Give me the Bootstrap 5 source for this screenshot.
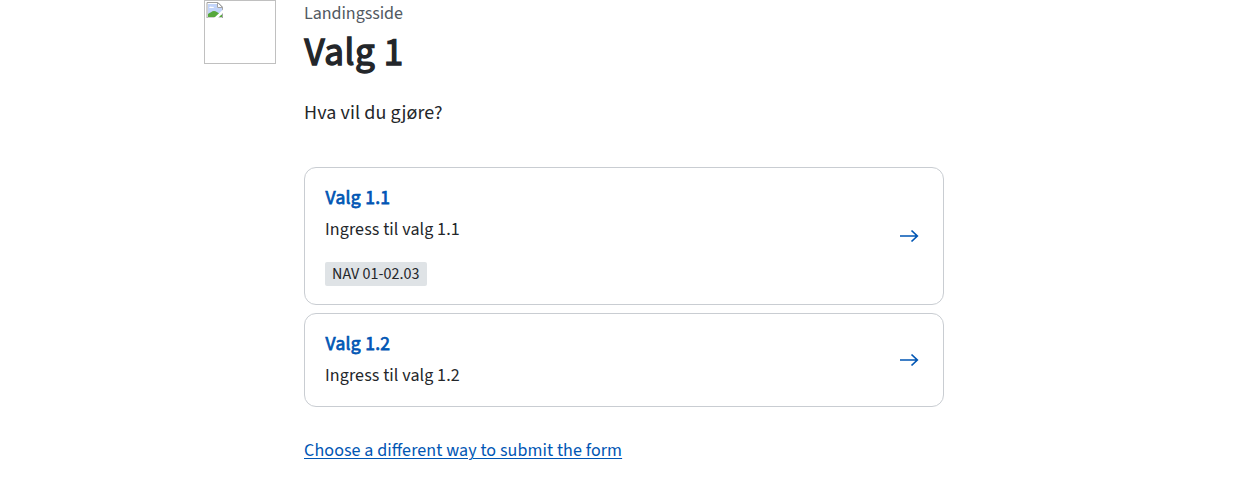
<!DOCTYPE html>
<html lang="no">
<head>
<meta charset="utf-8">
<meta name="viewport" content="width=device-width, initial-scale=1">
<title>Valg 1</title>
<link href="https://cdn.jsdelivr.net/npm/bootstrap@5.3.0/dist/css/bootstrap.min.css" rel="stylesheet">
<style>
body{font-family:"Source Sans 3","Source Sans Pro","Noto Sans CJK JP",sans-serif;color:#23262a;font-size:18px;letter-spacing:.1px;font-feature-settings:"liga" 1;line-height:28px;overflow:hidden}
.page{width:840px;gap:28px}
.picto{width:72px;height:64px;border:1px solid silver;padding:1px}
.picto svg{display:block}
.main-col{width:640px}
.eyebrow{color:#525962;line-height:28px;letter-spacing:-.05px}
h1{font-size:39px;line-height:50px;font-weight:400;-webkit-text-stroke:1.400px currentColor;letter-spacing:.6px;padding-left:.5px}
.lede{font-size:20px;letter-spacing:.1px;line-height:32px;margin:19px 0 38px}
.choice{border:1px solid #c9cdd2;border-radius:12px;padding:15px 20px 16px;color:inherit}
.choice h2{font-size:19.500px;line-height:30px;font-weight:400;-webkit-text-stroke:.750px currentColor;color:#0056b4;letter-spacing:.3px;margin:0 0 3px;padding-left:.5px}
.form-tag{background:#dfe3e6;border-radius:2px;font-size:16px;letter-spacing:.05px;line-height:24px;padding:0 7px;margin-top:18px;margin-bottom:2px}
.arrow{color:#0056b4;margin:1px 1px 0 0}
.alt-link{color:#0056b4;text-underline-offset:2px;text-decoration-thickness:1px;margin-top:30px}
</style>
</head>
<body>
<div class="page d-flex mx-auto align-items-start">
  <div class="picto flex-shrink-0">
    <svg width="18" height="16" viewBox="0 0 18 16"><path d="M1 .5h11l4.500 4.500v11H1z" fill="#fff" stroke="#a3a3a3"/><path d="M2 2h9v4h5v9H2z" fill="#c3d5fa"/><path d="M3 6a2 2 0 0 1 3-1 1.500 1.500 0 0 1 2 1z" fill="#fff"/><path d="M2 15v-3c2-1 4-3 6-3s4 2 8 4v2z" fill="#56a83c"/><path d="M11.500.5v5h5z" fill="#fff" stroke="#a3a3a3"/><path d="M8 16l9-8.500V11l-5 5z" fill="#fff"/></svg>
  </div>
  <main class="main-col">
    <div class="eyebrow">Landingsside</div>
    <h1 class="m-0">Valg 1</h1>
    <p class="lede">Hva vil du gjøre?</p>
    <div class="d-flex flex-column gap-2">
      <a href="#" class="choice d-flex align-items-center justify-content-between text-decoration-none">
        <div><h2>Valg 1.1</h2><div>Ingress til valg 1.1</div><span class="form-tag d-table">NAV 01-02.03</span></div>
        <svg class="arrow" width="24" height="24" viewBox="0 0 24 24" fill="none" stroke="currentColor" stroke-width="1.700"><path d="M2 12h17.500M13.500 6.500 19.300 12l-5.800 5.500"/></svg>
      </a>
      <a href="#" class="choice d-flex align-items-center justify-content-between text-decoration-none">
        <div><h2>Valg 1.2</h2><div>Ingress til valg 1.2</div></div>
        <svg class="arrow" width="24" height="24" viewBox="0 0 24 24" fill="none" stroke="currentColor" stroke-width="1.700"><path d="M2 12h17.500M13.500 6.500 19.300 12l-5.800 5.500"/></svg>
      </a>
    </div>
    <a href="#" class="alt-link d-inline-block">Choose a different way to submit the form</a>
  </main>
</div>
<script src="https://cdn.jsdelivr.net/npm/bootstrap@5.3.0/dist/js/bootstrap.bundle.min.js"></script>
</body>
</html>
